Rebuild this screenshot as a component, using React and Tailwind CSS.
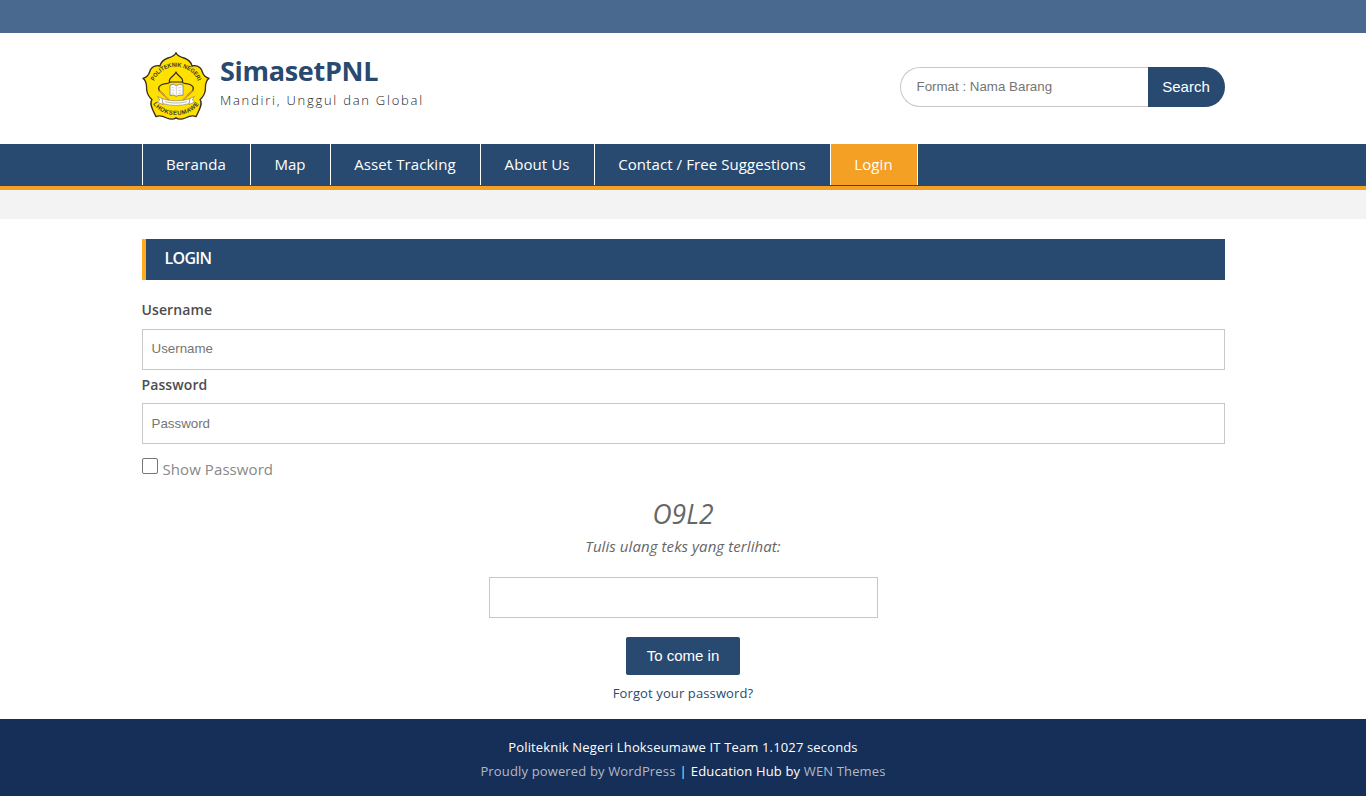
const navItems = [
  { label: 'Beranda', width: 'w-[108px]' },
  { label: 'Map', width: 'w-[80px]' },
  { label: 'Asset Tracking', width: 'w-[150px]' },
  { label: 'About Us', width: 'w-[114px]' },
  { label: 'Contact / Free Suggestions', width: 'w-[236px]' },
  { label: 'Login', width: 'w-[88px]', active: true },
];

function Crest() {
  return (
    <svg viewBox="18 18 204 204" className="h-[68px] w-[68px] shrink-0">
      <path
        d="M120 20 C124 30 134 33 144 36 C156 40 165 47 168 60 C178 57 191 60 196 70 C201 79 198 91 219 97 C206 106 209 118 208 132 C206 147 200 154 192 161 C202 174 188 194 180 212 C168 206 158 211 148 216 C138 220 127 221 120 215 C113 221 102 220 92 216 C82 211 72 206 60 212 C52 194 38 174 48 161 C40 154 34 147 32 132 C31 118 34 106 21 97 C42 91 39 79 44 70 C49 60 62 57 72 60 C75 47 84 40 96 36 C106 33 116 30 120 20 Z"
        fill="#ffe100"
        stroke="#3a2c20"
        strokeWidth="4"
        strokeLinejoin="round"
      />
      <path d="M86 150 C80 140 61 133 70 121 C80 109 94 116 101 109 C94 96 114 92 120 79 C126 92 146 96 139 109 C146 116 160 109 170 121 C179 133 160 140 154 150" fill="none" stroke="#33281d" strokeWidth="3.5" />
      <path d="M101 108 H139" stroke="#33281d" strokeWidth="3" />
      <path d="M67 134 C82 139 86 154 99 161 M173 134 C158 139 154 154 141 161" fill="none" stroke="#d79a38" strokeWidth="5" />
      <path d="M102 117 Q112 112 121 119 Q130 112 141 117 V148 Q130 145 121 151 Q112 145 102 148 Z" fill="#fff" stroke="#65605a" strokeWidth="2" />
      <path d="M121 119 V149 M107 124 L115 126 M107 132 L115 134 M107 140 L115 142 M127 126 L136 124 M127 134 L136 132 M127 142 L136 140" stroke="#a8a39e" strokeWidth="1.5" />
      <path d="M65 151 L80 159 L81 176 L64 168 L71 162 Z M175 151 L160 159 L159 176 L176 168 L169 162 Z" fill="#fff" stroke="#69614e" strokeWidth="1.5" />
      <path d="M78 158 Q120 171 162 158 L159 173 Q120 184 81 173 Z" fill="#fff" stroke="#69614e" strokeWidth="1.5" />
      <path d="M87 167 Q120 175 153 167" fill="none" stroke="#908a80" strokeWidth="3" strokeDasharray="2 1" />
      <path id="crest-top" d="M54 106 C78 48 162 48 186 106" fill="none" />
      <path id="crest-bottom" d="M46 164 C70 221 170 221 194 164" fill="none" />
      <text fill="#3b3427" fontFamily="Liberation Sans, sans-serif" fontWeight="bold" fontSize="18">
        <textPath href="#crest-top" startOffset="50%" textAnchor="middle" textLength="166" lengthAdjust="spacingAndGlyphs">POLITEKNIK NEGERI</textPath>
      </text>
      <text fill="#3b3427" fontFamily="Liberation Sans, sans-serif" fontWeight="bold" fontSize="18">
        <textPath href="#crest-bottom" startOffset="50%" textAnchor="middle" textLength="158">LHOKSEUMAWE</textPath>
      </text>
    </svg>
  );
}

function Field({ id, label, type, top, pad }) {
  return (
    <div className={top}>
      <label htmlFor={id} className="block text-[14px] leading-[21px] font-semibold tracking-[0.1px] text-[#4d4d4d]">
        {label}
      </label>
      <input
        id={id}
        type={type}
        placeholder={label}
        className={`${pad} block h-[41px] w-full border border-[#c8c8c8] px-[9px] font-['Liberation_Sans',Arial,sans-serif] text-[13.333px] outline-none placeholder:text-[#757575]`}
      />
    </div>
  );
}

export default function App() {
  return (
    <div className="flex h-[796px] flex-col bg-white font-['Open_Sans',sans-serif] text-[15px] text-[#666]">
      <div className="h-[33px] bg-[#4a698f]" />
      <header className="mx-auto flex h-[111px] w-[1083px] items-start justify-between">
        <div className="flex pt-[19px]">
          <Crest />
          <div className="ml-[10.5px]">
            <h1 className="h-[38px] text-[27px] leading-[38px] font-bold tracking-[-0.3px] whitespace-nowrap text-[#294a70]">SimasetPNL</h1>
            <p className="text-[13px] leading-[20px] font-light tracking-[1.75px] whitespace-nowrap text-[#222]">Mandiri, Unggul dan Global</p>
          </div>
        </div>
        <form className="mt-[34px] flex h-10 w-[325px] font-['Liberation_Sans',Arial,sans-serif]">
          <input
            placeholder="Format : Nama Barang"
            className="w-[248px] rounded-l-[20px] border border-r-0 border-[#c8c8c8] pl-4 text-[13.333px] outline-none placeholder:text-[#757575]"
          />
          <button type="button" className="w-[77px] rounded-r-[20px] bg-[#294a70] text-[15px] text-white">Search</button>
        </form>
      </header>
      <nav className="h-[46px] border-b-4 border-[#f4a024] bg-[#294a70]">
        <ul className="mx-auto flex h-[41px] w-[1083px]">
          {navItems.map((item) => (
            <li
              key={item.label}
              className={`${item.width} ${item.active ? 'border-x bg-[#f4a024]' : 'border-l'} flex items-center justify-center border-white leading-[41px] tracking-[0.08px] whitespace-nowrap text-white`}
            >
              <a>{item.label}</a>
            </li>
          ))}
        </ul>
      </nav>
      <div className="h-[29px] bg-[#f3f3f3]" />
      <main className="mx-auto w-[1083px] grow pt-5">
        <h2 className="h-[41px] border-l-4 border-[#ffab1f] bg-[#294a70] pl-[19px] text-[16px] leading-[38px] font-semibold tracking-[-0.7px] text-white">LOGIN</h2>
        <Field id="username" label="Username" type="text" top="mt-[19px] [&>label]:h-[30px]" pad="pb-[2px]" />
        <Field id="password" label="Password" type="password" top="mt-[4px] [&>label]:h-[29px]" pad="pb-0" />
        <label className="mt-[14px] flex h-6 text-[#888]">
          <input type="checkbox" className="mr-[5px] h-4 w-4 appearance-none rounded-[2px] border border-[#767676] bg-white" />
          <span className="leading-[22px] tracking-[0.08px]">Show Password</span>
        </label>
        <div className="flex flex-col items-center pt-[14px]">
          <p className="text-[26.5px] leading-[37px] italic">O9L2</p>
          <p className="leading-[26px] tracking-[0.08px] italic">Tulis ulang teks yang terlihat:</p>
          <input aria-label="Captcha" className="mt-[18px] h-[41px] w-[389px] border border-[#c8c8c8] outline-none" />
          <button type="button" className="mt-[19px] h-[38px] w-[114px] rounded-[2px] bg-[#294a70] font-['Liberation_Sans',Arial,sans-serif] text-[15px] text-white">To come in</button>
          <a className="mt-[8px] text-[13px] leading-5 tracking-[0.12px] text-[#294a70]">Forgot your password?</a>
        </div>
      </main>
      <footer className="h-[77px] bg-[#152f59] pt-4 text-center text-[13px] leading-6 tracking-[0.15px] text-white">
        <p>Politeknik Negeri Lhokseumawe IT Team 1.1027 seconds</p>
        <p>
          <a className="text-[#b4b9c1]">Proudly powered by WordPress</a>
          <span className="mx-[4px] text-[#bdeeff]">|</span>
          Education Hub by <a className="text-[#b4b9c1]">WEN Themes</a>
        </p>
      </footer>
    </div>
  );
}
